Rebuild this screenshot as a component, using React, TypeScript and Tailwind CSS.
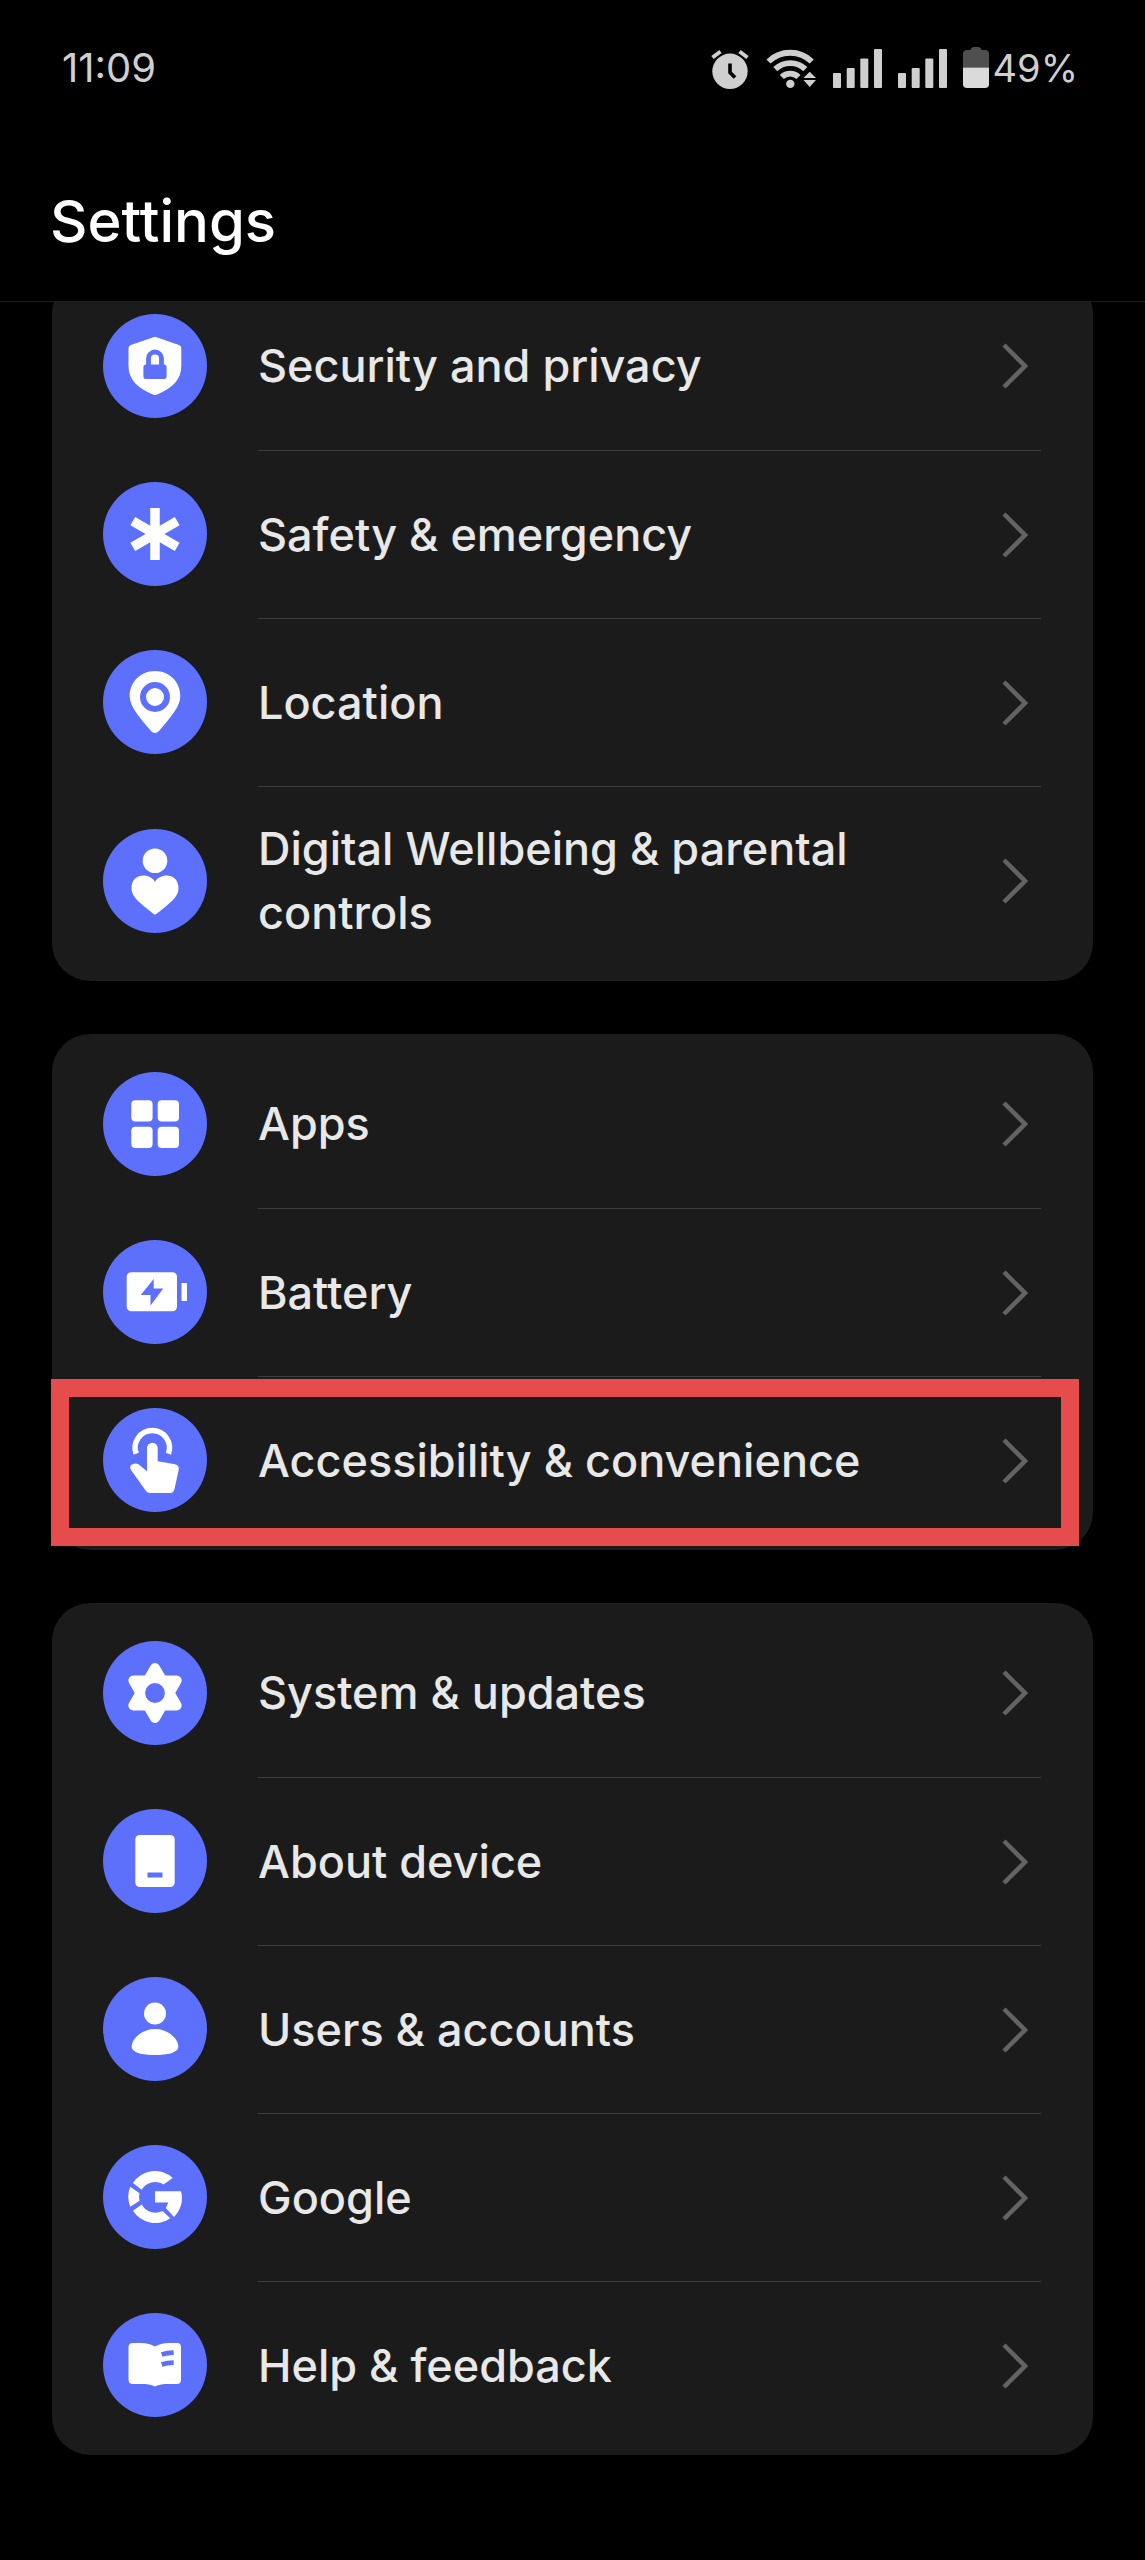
import type { ReactNode } from "react"

// ---------- icons (104 x 104 box, white on the blue disc) ----------
const BLUE = "#5c70fb"

const icons: Record<string, ReactNode> = {
  shield: (
    <>
      <path d="M50.5 23.2Q52 22.4 53.5 23.2L76 31Q78.3 31.8 78.3 34V52C78.3 66 69 74.5 53.5 80.8Q52 81.4 50.5 80.8C35 74.5 25.5 66 25.5 52V34Q25.5 31.8 27.8 31Z" />
      <rect x="40.4" y="50.5" width="23.2" height="14.5" rx="2.5" fill={BLUE} />
      <path d="M45.5 52V44.5a6.5 6.5 0 0 1 13 0V52" fill="none" stroke={BLUE} strokeWidth="4.8" />
    </>
  ),
  asterisk: <path d="M52 26V78M29.8 39.1L74.2 64.9M74.2 39.1L29.8 64.9" stroke="#fff" strokeWidth="9.5" />,
  pin: (
    <>
      <path d="M52 21C66.5 21 77.3 32 77.3 46C77.3 56 69 65.5 56 81Q52 85 48 81C35 65.5 26.7 56 26.7 46C26.7 32 37.5 21 52 21Z" />
      <circle cx="52" cy="47" r="12" fill="none" stroke={BLUE} strokeWidth="6" />
    </>
  ),
  wellbeing: (
    <>
      <circle cx="52" cy="31.7" r="12.3" />
      <path d="M52 53C56 44.5 75.5 42.5 75.5 59.5C75.5 68.5 66 74.5 54 84.5Q52 86.5 50 84.5C38 74.5 28.5 68.5 28.5 59.5C28.5 42.5 48 44.5 52 53Z" />
    </>
  ),
  apps: (
    <>
      <rect x="28.3" y="28.3" width="21.3" height="21.3" rx="4" />
      <rect x="54.7" y="28.3" width="21.3" height="21.3" rx="4" />
      <rect x="28.3" y="54.7" width="21.3" height="21.3" rx="4" />
      <rect x="54.7" y="54.7" width="21.3" height="21.3" rx="4" />
    </>
  ),
  battery: (
    <>
      <rect x="23.7" y="32.3" width="50.3" height="39" rx="4.5" />
      <rect x="78.5" y="43" width="5.5" height="18" rx="0.5" />
      <path d="M50.7 39L37.7 55H47.5V65.5L60.3 48.5H50.7Z" fill={BLUE} />
    </>
  ),
  touch: (
    <>
      <path d="M33.2 45.8A17.2 17.2 0 1 1 65.4 45.8" fill="none" stroke="#fff" strokeWidth="5.5" />
      <path d="M44 40A5.35 5.35 0 0 1 54.7 40V53.3L72 56.2Q76.5 57.5 75.7 62L71.5 81Q70.5 85 67.5 85H47Q44.5 85 43 83L28 62Q26 58.5 28.5 56.7Q32.5 54.5 35.5 56.3L44 63.3Z" />
    </>
  ),
  gear: (
    <>
      <path
        d="M52 27L59.25 39.4L73.65 39.5L66.5 52L73.65 64.5L59.25 64.6L52 77L44.75 64.6L30.35 64.5L37.5 52L30.35 39.5L44.75 39.4Z"
        stroke="#fff"
        strokeWidth="10"
        strokeLinejoin="round"
      />
      <circle cx="52" cy="52" r="9.9" fill={BLUE} />
    </>
  ),
  device: (
    <>
      <rect x="32.3" y="26" width="39.4" height="52" rx="4.5" />
      <rect x="44.5" y="63.5" width="15" height="5" fill={BLUE} />
    </>
  ),
  user: (
    <>
      <circle cx="52" cy="36.5" r="11" />
      <path d="M52 52C66 52 75.3 62.5 75.3 69.5C75.3 76 64 78 52 78C40 78 28.7 76 28.7 69.5C28.7 62.5 38 52 52 52Z" />
    </>
  ),
  google: (
    <>
      <path d="M69.7 33A26.2 26.2 0 0 0 30 38L38.7 44.7A15.6 15.6 0 0 1 60.5 39.5Z" />
      <path d="M27.3 41.7L36.5 48.3A15.6 15.6 0 0 0 36.5 55.7L27.3 61.7A26.2 26.2 0 0 1 27.3 41.7Z" />
      <path d="M30 65.7L38.7 59.5A15.6 15.6 0 0 0 59.5 66L67.3 73.3A26.2 26.2 0 0 1 30 65.7Z" />
      <path d="M52 46.3H78A26.2 26.2 0 0 1 71 72L62.8 63L65.3 57.5H52Z" />
    </>
  ),
  book: (
    <>
      <path d="M30 30H38C44 30 48 31.5 52 33.5C56 31.5 60 30 66 30H74Q78 30 78 34V66.5Q78 71 74 71H66C60 71 56 71.5 52 73.5C48 71.5 44 71 38 71H30Q25.5 71 25.5 66.5V34Q25.5 30 30 30Z" />
      <path d="M58.7 41.5Q64 39.8 70.7 39.6M58.7 51.5Q64 49.8 70.7 49.6" fill="none" stroke={BLUE} strokeWidth="4.6" />
    </>
  ),
}

function RowIcon({ name }: { name: string }) {
  return (
    <svg viewBox="0 0 104 104" className="size-[104px] shrink-0" fill="#fff" aria-hidden>
      <circle cx="52" cy="52" r="52" fill={BLUE} />
      {icons[name]}
    </svg>
  )
}

// ---------- status bar ----------
function SignalBars() {
  return (
    <svg viewBox="0 0 49 42" className="h-[42px] w-[49px]" fill="#cfcfcf" aria-hidden>
      <rect x="0" y="26" width="8" height="15" rx="1" />
      <rect x="13.7" y="21" width="8" height="20" rx="1" />
      <rect x="27.3" y="11.5" width="8" height="29.5" rx="1" />
      <rect x="41" y="2" width="8" height="39" rx="1" />
    </svg>
  )
}

function StatusBar() {
  return (
    <div className="flex items-center justify-between pt-[47px] pr-[67px] pl-[62px] leading-[42px] text-[#cfcfcf]">
      <time className="text-[40px]">11:09</time>
      <div className="flex items-center gap-4 text-[38px]">
        <svg viewBox="0 0 39 42" className="h-[42px] w-[39px]" aria-hidden>
          <circle cx="19" cy="24.3" r="17.7" fill="#cfcfcf" />
          <path d="M1.5 10.5L9.5 4.5M36.5 10.5L28.5 4.5" stroke="#cfcfcf" strokeWidth="4" />
          <path d="M19 16.5V25.5L24 30.5" fill="none" stroke="#000" strokeWidth="3.6" />
        </svg>
        <svg viewBox="0 0 51 42" className="h-[42px] w-[51px]" fill="none" stroke="#cfcfcf" strokeWidth="5.8" aria-hidden>
          <path d="M2.5 14.5A31 31 0 0 1 45.7 14.5" />
          <path d="M9.3 22.2A21.5 21.5 0 0 1 39.3 22.2" />
          <path d="M15.8 30A12 12 0 0 1 32.5 30" />
          <circle cx="24.3" cy="36.9" r="4.2" fill="#cfcfcf" stroke="none" />
          <path d="M43.7 24.7L50 31H37.5ZM37.5 33H50L43.7 40Z" fill="#cfcfcf" stroke="none" />
        </svg>
        <SignalBars />
        <SignalBars />
        <div className="flex items-center gap-1">
          <svg viewBox="0 0 26 42" className="h-[42px] w-[26px]" aria-hidden>
            <path d="M0 20.5V7Q0 3 4 3H7.5Q8.5 0 11 0H15Q17.5 0 18.5 3H22Q26 3 26 7V20.5Z" fill="#4f4f4f" />
            <path d="M0 20.5H26V37Q26 41 22 41H4Q0 41 0 37Z" fill="#dadada" />
          </svg>
          <span>49%</span>
        </div>
      </div>
    </div>
  )
}

// ---------- list ----------
type Item = { icon: string; label: string; highlighted?: boolean }

const groups: Item[][] = [
  [
    { icon: "shield", label: "Security and privacy" },
    { icon: "asterisk", label: "Safety & emergency" },
    { icon: "pin", label: "Location" },
    { icon: "wellbeing", label: "Digital Wellbeing & parental controls" },
  ],
  [
    { icon: "apps", label: "Apps" },
    { icon: "battery", label: "Battery" },
    { icon: "touch", label: "Accessibility & convenience", highlighted: true },
  ],
  [
    { icon: "gear", label: "System & updates" },
    { icon: "device", label: "About device" },
    { icon: "user", label: "Users & accounts" },
    { icon: "google", label: "Google" },
    { icon: "book", label: "Help & feedback" },
  ],
]

function Row({ item, first }: { item: Item; first: boolean }) {
  return (
    <li className="relative">
      <a href="#" className="flex items-center gap-[51px] pr-[52px] pl-[51px]">
        <RowIcon name={item.icon} />
        <div
          className={`flex min-h-[168px] flex-1 items-center justify-between py-[30px] pr-[13px] ${
            first ? "" : "border-t border-[#3d3d3d]"
          }`}
        >
          <span className="pr-[120px] text-[45px] leading-[64px] font-medium text-[#e8e8e8]">{item.label}</span>
          <svg viewBox="0 0 26 46" className="h-[46px] w-[26px] shrink-0" fill="none" stroke="#636363" strokeWidth="4.5" aria-hidden>
            <path d="M2 2L23 23L2 44" />
          </svg>
        </div>
      </a>
      {item.highlighted && (
        <div className="pointer-events-none absolute top-[3px] right-[14px] bottom-[-2px] left-[-1px] border-[18px] border-[#e74c4c]" />
      )}
    </li>
  )
}

export default function App() {
  return (
    <div className="min-h-screen bg-black pb-[104px] font-['Inter',sans-serif] text-white">
      <header className="sticky top-0 z-10 border-b border-[#1c1c1c] bg-black">
        <StatusBar />
        <h1 className="px-[50px] pt-24 pb-11 text-[58px] leading-[72px] font-medium">Settings</h1>
      </header>

      {/* the first card is partly scrolled under the header */}
      <main className="-mt-[26px] flex flex-col gap-[53px] px-[52px]">
        {groups.map((items) => (
          <ul key={items[0].label} className="rounded-[38px] bg-[#1b1b1b] py-[6px]">
            {items.map((item, i) => (
              <Row key={item.label} item={item} first={i === 0} />
            ))}
          </ul>
        ))}
      </main>
    </div>
  )
}
